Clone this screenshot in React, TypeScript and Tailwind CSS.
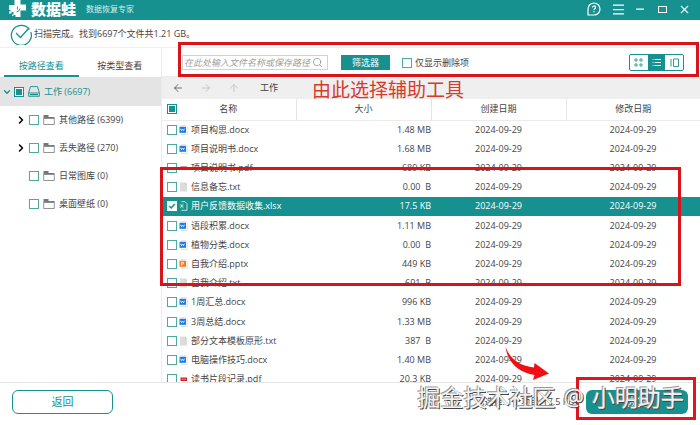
import React, { useState } from "react";

// import icons
import { Search, Menu, Minus, X, ArrowLeft, ArrowRight, ArrowUp, ChevronDown, ChevronRight } from "lucide-react";

const folders = [
    { name: "其他路径 (6399)", nested: true },
    { name: "丢失路径 (270)", nested: true },
    { name: "日常图库 (0)", nested: false },
    { name: "桌面壁纸 (0)", nested: false },
];

const files = [
    { name: "项目构思.docx", type: "docx", size: "1.48", unit: "MB" },
    { name: "项目说明书.docx", type: "docx", size: "1.68", unit: "MB" },
    { name: "项目说明书.pdf", type: "pdf", size: "689", unit: "KB" },
    { name: "信息备忘.txt", type: "txt", size: "0.00", unit: "B" },
    { name: "用户反馈数据收集.xlsx", type: "xlsx", size: "17.5", unit: "KB" },
    { name: "语段积累.docx", type: "docx", size: "1.11", unit: "MB" },
    { name: "植物分类.docx", type: "docx", size: "0.00", unit: "B" },
    { name: "自我介绍.pptx", type: "pptx", size: "449", unit: "KB" },
    { name: "自我介绍.txt", type: "txt", size: "691", unit: "B" },
    { name: "1周汇总.docx", type: "docx", size: "996", unit: "KB" },
    { name: "3周总结.docx", type: "docx", size: "1.33", unit: "MB" },
    { name: "部分文本模板原形.txt", type: "txt", size: "387", unit: "B" },
    { name: "电脑操作技巧.docx", type: "docx", size: "1.40", unit: "MB" },
    { name: "读书片段记录.pdf", type: "pdf", size: "20.3", unit: "KB" },
];

const box = "block size-[10px] shrink-0 appearance-none border border-[#4fa99d] bg-white";
const partialBox = "block size-[10px] shrink-0 appearance-none border border-[#16918f] bg-[#16918f] shadow-[inset_0_0_0_1px_white]";
const windowButton = "flex w-[22px] justify-center";

const Logo = () => (
    <svg className="h-5 w-[19px] shrink-0" viewBox="0 0 19 20">
        <path d="M6.500 0h6v5.500h5.500v6h-5.500v6.500h-5v-2h-2v-3h-3v-2H1v-5h5.500z" fill="#fff" />
        <path d="M9.500 7.500v3M12 9.500q-.5 3-3.500 3.500" stroke="#16918f" strokeWidth="0.900" fill="none" />
        <path d="M1 12.500h2.500v2H1zM4 15.500h1.500V17H4z" fill="#fff" />
    </svg>
);

const FileIcon = ({ type }: { type: string }) => {
    if (type === "pdf") {
        return (
            <svg className="h-[10px] w-[9px] shrink-0" viewBox="0 0 9 10">
                <path d="M1.500 3.500h6.500v3.500H1.500z" fill="#cf2233" />
                <path d="M2.500 5.200h4.500" stroke="#ee9aa0" strokeWidth="0.800" />
            </svg>
        );
    }
    if (type === "txt") {
        return (
            <svg className="h-[10px] w-[9px] shrink-0" viewBox="0 0 9 10">
                <path d="M1 0.500h5l2 2v7H1z" fill="#dcdcdc" />
                <path d="M6 0.500v2h2" fill="#c4c4c4" />
            </svg>
        );
    }
    if (type === "xlsx") {
        return (
            <svg className="h-[10px] w-[9px] shrink-0" viewBox="0 0 9 10">
                <path d="M2.500 0.700h3.500l2 2v6.600H2.500" fill="none" stroke="#d5eeec" strokeWidth="0.900" />
                <path d="M0.500 2.500h4.500v5H0.500z" fill="#2aa388" />
                <path d="M1.600 3.500l2.300 3M3.900 3.500l-2.300 3" stroke="#fff" strokeWidth="0.800" />
            </svg>
        );
    }
    return (
        <svg className="h-[10px] w-[9px] shrink-0" viewBox="0 0 9 10">
            <path d="M2 0.500h4.500l2 2v7H2z" fill="#f4f6f8" stroke="#cfd6dc" strokeWidth="0.500" />
            <path d="M0.500 1.800h6.500v6h-6.500z" fill={type === "pptx" ? "#ee7d21" : "#1f7be0"} />
            {type === "pptx" ? (
                <path d="M2.500 6.700V3.300h2v1.700h-2" fill="none" stroke="#fff" strokeWidth="0.700" />
            ) : (
                <path d="M1.500 3.700l1 2 1-1.700 1 1.700 1-2" fill="none" stroke="#fff" strokeWidth="0.800" />
            )}
        </svg>
    );
};

const FolderIcon = () => (
    <svg className="h-[10px] w-3 shrink-0" viewBox="0 0 12 10">
        <path d="M0.500 0h5v2h6v1.500H0.500z" fill="#777" />
        <path d="M0.700 3.500h10.600v6H0.700z" fill="#fff" stroke="#777" strokeWidth="0.800" />
    </svg>
);

const DriveIcon = () => (
    <svg className="h-[11px] w-3 shrink-0" viewBox="0 0 12 11" fill="none" stroke="#16918f" strokeWidth="0.900">
        <path d="M0.600 7L2.400 0.600h7.200L11.400 7" />
        <path d="M0.600 7h10.800v3.300H0.600z" />
        <path d="M2 8.600h8" strokeWidth="1.300" />
    </svg>
);

const TitleBar = () => (
    <header className="flex h-5 shrink-0 items-center bg-[#16918f] pr-[5px] pb-0.5 pl-2 text-white">
        <Logo />
        <span className="ml-1 text-[15px] leading-5 font-black">数据蛙</span>
        <span className="ml-2.5 text-[8px] text-[#d6eeed]">数据恢复专家</span>
        <div className="ml-auto flex items-center">
            <button type="button" aria-label="帮助" className={windowButton + " mr-0.5"}>
                <svg className="size-[14px]" viewBox="0 0 14 14" fill="none" stroke="#fff">
                    <path d="M1 13V7a6 6 0 1 1 6 6z" strokeWidth="1.200" />
                    <path d="M5.500 5.500a1.500 1.500 0 1 1 2.200 1.300q-.7.400-.7 1.200M7 9v1.200" strokeWidth="1.200" />
                </svg>
            </button>
            <button type="button" aria-label="菜单" className={windowButton}><Menu size={15} strokeWidth={2} /></button>
            <button type="button" aria-label="最小化" className={windowButton}><Minus size={12} strokeWidth={2.5} /></button>
            <button type="button" aria-label="最大化" className={windowButton}>
                <span className="h-[7px] w-[9px] border border-white" />
            </button>
            <button type="button" aria-label="关闭" className={windowButton}><X size={13} strokeWidth={2} /></button>
        </div>
    </header>
);

const Sidebar = () => (
    <aside className="flex w-[162px] shrink-0 flex-col border-r border-[#ececec]">
        <div className="flex h-[29px] shrink-0 gap-1 px-1">
            <button type="button" className="w-[75px] border-b-2 border-[#16918f] pt-2 text-[#16918f]">按路径查看</button>
            <button type="button" className="w-[75px] border-b-2 border-transparent pt-2">按类型查看</button>
        </div>
        <label className="flex h-[29px] shrink-0 items-center bg-[#e4e4e4] pl-0.5 text-[#16918f]">
            <ChevronDown size={10} strokeWidth={3} />
            <input type="checkbox" className={partialBox + " mr-1 ml-0.5"} />
            <DriveIcon />
            <span className="ml-1">工作 (6697)</span>
        </label>
        <ul>
            {folders.map((folder) => (
                <li key={folder.name}>
                    <label className="flex h-7 items-center pl-[15px]">
                        <ChevronRight size={12} strokeWidth={3} className={folder.nested ? "text-black" : "invisible"} />
                        <input type="checkbox" className={box + " mr-1 ml-0.5"} />
                        <FolderIcon />
                        <span className="ml-1">{folder.name}</span>
                    </label>
                </li>
            ))}
        </ul>
    </aside>
);

const Toolbar = () => (
    <div className="flex h-[29px] shrink-0 items-center border-b border-[#ececec] pt-px pr-4 pl-5">
        <div className="flex h-[15px] w-[146px] items-center border border-[#d2d2d2] pr-1">
            <input aria-label="搜索" placeholder="在此处输入文件名称或保存路径" className="min-w-0 flex-1 pl-px italic outline-none placeholder:text-[#a0a0a0]" />
            <Search size={11} strokeWidth={1.5} className="shrink-0 text-[#888]" />
        </div>
        <button type="button" className="ml-[13px] h-[15px] w-[49px] bg-[#16918f] text-white">筛选器</button>
        <label className="ml-3 flex items-center gap-[3px]">
            <input type="checkbox" className={box} />
            仅显示删除项
        </label>
        <div className="ml-auto flex h-[17px] w-[55px] rounded-xs border border-[#16918f] text-[#16918f]">
            <button type="button" aria-label="图标视图" className="flex flex-1 items-center justify-center">
                <svg className="size-[9px]" viewBox="0 0 9 9" fill="none" stroke="currentColor" strokeWidth="0.900">
                    <circle cx="2" cy="2" r="1.200" />
                    <circle cx="7" cy="2" r="1.200" />
                    <circle cx="2" cy="7" r="1.200" />
                    <circle cx="7" cy="7" r="1.200" />
                </svg>
            </button>
            <button type="button" aria-label="列表视图" className="flex flex-1 items-center justify-center bg-[#16918f] text-white">
                <svg className="size-[9px]" viewBox="0 0 9 9" stroke="currentColor" strokeWidth="0.900">
                    <path d="M0.500 1.500h1M2.500 1.500H9M0.500 4.500h1M2.500 4.500H9M0.500 7.500h1M2.500 7.500H9" />
                </svg>
            </button>
            <button type="button" aria-label="预览视图" className="flex flex-1 items-center justify-center">
                <svg className="size-[9px]" viewBox="0 0 9 9" fill="none" stroke="currentColor" strokeWidth="0.900">
                    <path d="M1 1v7.500M3.500 1h5v7.500h-5z" />
                </svg>
            </button>
        </div>
    </div>
);

const FileTable = () => {
    const [selected, setSelected] = useState(4);

    return (
        <div className="min-h-0 flex-1 overflow-hidden">
            <table className="h-[290px] w-full table-fixed border-collapse">
                <colgroup>
                    <col className="w-[134px]" />
                    <col className="w-[135px]" />
                    <col className="w-[135px]" />
                    <col />
                </colgroup>
                <thead>
                    <tr className="h-[21px] border-b border-[#ececec] [&>th]:font-normal">
                        <th className="border-r border-[#e4e4e4] p-0">
                            <div className="flex items-center pl-[5px]">
                                <input type="checkbox" aria-label="全选" className={partialBox} />
                                <span className="flex-1 pr-4">名称</span>
                            </div>
                        </th>
                        <th className="border-r border-[#e4e4e4] p-0">大小</th>
                        <th className="border-r border-[#e4e4e4] p-0">创建日期</th>
                        <th className="p-0">修改日期</th>
                    </tr>
                </thead>
                <tbody>
                    {files.map((file, i) => (
                        <tr key={file.name} onClick={() => setSelected(i)} className={i === selected ? "h-[19px] bg-[#16918f] text-white" : "h-[19px]"}>
                            <td className="p-0">
                                <label className="flex items-center pl-[5px] whitespace-nowrap">
                                    {i === selected ? (
                                        <span className="relative size-[10px] shrink-0">
                                            <input type="checkbox" defaultChecked className="block size-[10px] appearance-none bg-white" />
                                            <svg className="absolute inset-0" viewBox="0 0 10 10" fill="none" stroke="#16918f" strokeWidth="1.500">
                                                <path d="M2.200 5l2 2 3.600-4" />
                                            </svg>
                                        </span>
                                    ) : (
                                        <input type="checkbox" className={box} />
                                    )}
                                    <span className="mr-[3px] ml-0.5"><FileIcon type={file.type} /></span>
                                    {file.name}
                                </label>
                            </td>
                            <td className="p-0 text-right whitespace-pre">{file.size} {file.unit.padStart(2, " ")}</td>
                            <td className="p-0 text-center">2024-09-29</td>
                            <td className="p-0 text-center">2024-09-29</td>
                        </tr>
                    ))}
                </tbody>
            </table>
        </div>
    );
};

// red frames, arrow and captions drawn over the window
const Annotations = () => (
    <div className="pointer-events-none absolute inset-0">
        <div className="absolute top-[42px] right-px left-[178px] h-[35px] border-3 border-[#d8141a]" />
        <div className="absolute top-[167px] right-[19px] left-[160px] h-[119px] border-3 border-[#d8141a]" />
        <p className="absolute top-[78px] left-[312px] text-[19px] leading-6 text-[#d9392b]">由此选择辅助工具</p>
        <svg className="absolute right-[150px] bottom-[44px] h-9 w-12" viewBox="0 0 48 36">
            <path d="M3.500 2C8 14 18 21 32 22.500l.5-4.500L47 28.500 31 35l1.500-5C16 27 6 18 3.500 2z" fill="#f01014" />
        </svg>
        <div className="absolute right-1 bottom-[5px] h-[43px] w-[120px] border-3 border-[#e0161c]" />
        <p className="absolute right-4 bottom-3.5 flex gap-2 text-[23px] leading-7 whitespace-nowrap text-[#f2f2f2] [text-shadow:-1px_-1px_0_#999,1px_1px_0_#444]">
            <span>掘金技术社区</span>
            <span>@</span>
            <span>小明助手</span>
        </p>
    </div>
);

const App = () => {
    return (
        <div className="relative flex h-screen flex-col overflow-hidden bg-white font-['Open_Sans','Noto_Sans_CJK_SC',sans-serif] text-[9px] leading-3 text-[#444]">
            <TitleBar />
            <div className="flex h-7 shrink-0 items-center border-b border-[#f0f0f0] pl-2.5">
                <svg className="size-[22px]" viewBox="0 0 22 22" fill="none" stroke="#16918f">
                    <path d="M19.500 6.500A10 10 0 1 0 20.800 9" strokeWidth="1.200" />
                    <path d="M6 10l4.500 4.500L19 5" strokeWidth="1.300" />
                </svg>
                <p className="ml-0.5">扫描完成。找到6697个文件共1.21 GB。</p>
            </div>
            <main className="flex min-h-0 flex-1">
                <Sidebar />
                <section className="flex min-w-0 flex-1 flex-col">
                    <Toolbar />
                    <nav className="flex h-[22px] shrink-0 items-center bg-[#efefef] pl-2.5">
                        <button type="button" aria-label="后退"><ArrowLeft size={12} strokeWidth={1.5} /></button>
                        <button type="button" aria-label="前进" className="ml-4 text-[#b8b8b8]"><ArrowRight size={12} strokeWidth={1.5} /></button>
                        <button type="button" aria-label="上一级" className="ml-4 text-[#b8b8b8]"><ArrowUp size={12} strokeWidth={1.5} /></button>
                        <span className="ml-5">工作</span>
                    </nav>
                    <FileTable />
                </section>
            </main>
            <footer className="flex h-[43px] shrink-0 items-center border-t border-[#e6e6e6] px-3 pb-1">
                <button type="button" className="h-6 w-[101px] rounded-md border border-[#16918f] text-[11px] text-[#16918f]">返回</button>
                <p className="mr-3 ml-auto">已选择: 1个项目/17.5 KB</p>
                <button type="button" className="h-6 w-[102px] rounded-md bg-[#16918f] text-[11px] text-white">恢复</button>
            </footer>
            <Annotations />
        </div>
    );
};

export default App;
